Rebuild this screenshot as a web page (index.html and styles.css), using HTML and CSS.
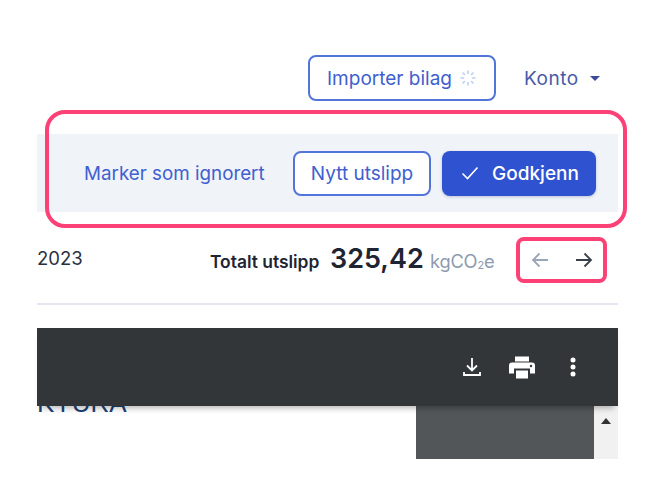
FILE: index.html
```html
<!DOCTYPE html>
<html lang="no">
<head>
<meta charset="utf-8">
<title>Bilag</title>
<link rel="stylesheet" href="styles.css">
</head>
<body>
<div class="page">
  <header class="top">
    <button class="btn btn-outline btn-import">Importer bilag
      <svg class="spinner" width="18" height="18" viewBox="0 0 18 18" fill="none" stroke="#bccff0" stroke-width="1.6" stroke-linecap="round"><path d="M9 2v2.500M9 13.500v2.500M2 9h2.500M13.500 9h2.500M4 4l1.500 1.500M12.500 12.500l1.500 1.500M4 14l1.500-1.500M12.500 5.500l1.500-1.500"/></svg>
    </button>
    <a class="account">Konto <span class="caret"></span></a>
  </header>

  <section class="actions">
    <a class="link">Marker som ignorert</a>
    <button class="btn btn-outline btn-new">Nytt utslipp</button>
    <button class="btn btn-primary">
      <svg width="18" height="14" viewBox="0 0 18 14" fill="none" stroke="#fff" stroke-width="1.6"><path d="M1.500 7.500l5 5 10-11"/></svg>
      Godkjenn
    </button>
    <div class="mark mark-actions"></div>
  </section>

  <section class="summary">
    <span class="year">2023</span>
    <div class="total">
      <span class="total-label">Totalt utslipp</span>
      <span class="total-value">325,42</span>
      <span class="total-unit">kgCO<sub>2</sub>e</span>
    </div>
    <nav class="pager">
      <svg width="18" height="16" viewBox="0 0 18 16" fill="none" stroke="#9aa5b8" stroke-width="1.8"><path d="M17 8H2M8.500 1.500L2 8l6.500 6.500"/></svg>
      <svg width="18" height="16" viewBox="0 0 18 16" fill="none" stroke="#3a3f4b" stroke-width="1.8"><path d="M1 8h15M9.500 1.500L16 8l-6.500 6.500"/></svg>
      <div class="mark mark-pager"></div>
    </nav>
  </section>

  <hr class="divider">

  <section class="viewer">
    <div class="toolbar">
      <svg width="18" height="20" viewBox="0 0 18 20" fill="none" stroke="#fff" stroke-width="1.800"><path d="M9 1v12M4 8.500l5 5 5-5M1 15v3h16v-3"/></svg>
      <svg width="26" height="23" viewBox="0 0 26 22" fill="#fff"><path d="M6 0h14v5H6zM3 6h20a3 3 0 0 1 3 3v8h-5v-5H5v5H0V9a3 3 0 0 1 3-3zM7 14h12v8H7z"/><circle cx="22" cy="9.500" r="1.200" fill="#323639"/></svg>
      <svg class="more" width="6" height="20" viewBox="0 0 6 20" fill="#fff"><circle cx="3" cy="3" r="2.500"/><circle cx="3" cy="10" r="2.500"/><circle cx="3" cy="17" r="2.500"/></svg>
    </div>
    <div class="pane">
      <div class="doc"><span class="doc-title">KYURA</span></div>
      <div class="thumbs"></div>
      <div class="scrollbar"><span class="arrow"></span></div>
    </div>
  </section>
</div>
</body>
</html>
```
FILE: styles.css
```css
* { box-sizing: border-box; }
html, body { margin: 0; height: 100%; background: #fff; overflow: hidden; }
body { font-family: Inter, "Liberation Sans", sans-serif; color: #1f2433; }

.page { width: 581px; margin-left: 37px; padding-top: 55px; }

.top { display: flex; justify-content: flex-end; align-items: center; height: 46px; margin-right: 17px; }
.btn { font: inherit; font-size: 19px; height: 45px; border-radius: 8px; display: flex; align-items: center; justify-content: center; cursor: pointer; white-space: nowrap; }
.btn-outline { background: #fff; border: 2px solid #5375da; color: #3f60cf; }
.btn-import { width: 188px; height: 46px; gap: 7px; }
.spinner { flex: none; }
.account { display: flex; align-items: center; font-size: 19px; letter-spacing: .5px; color: #4a5aa8; margin-left: 28px; width: 77px; gap: 11px; }
.caret { width: 0; height: 0; border-left: 5px solid transparent; border-right: 5px solid transparent; border-top: 5px solid #3b4a9c; }

.actions { position: relative; display: flex; align-items: center; height: 78px; margin-top: 33px; background: #f0f3f8; padding-left: 47px; }
.link { font-size: 18.800px; color: #3f60cf; width: 209px; }
.btn-new { width: 138px; margin-right: 11px; }
.btn-primary { width: 154px; gap: 13px; padding-left: 8px; background: #2f52d0; border: 0; color: #fff; font-weight: 500; box-shadow: 0 1px 3px rgba(30, 50, 120, .25); }

.mark { position: absolute; border: 4px solid #fb4175; pointer-events: none; }
.mark-actions { left: 8px; top: -24px; width: 582px; height: 118px; border-radius: 20px; }
.mark-pager { inset: 0; border-radius: 8px; }

.summary { position: relative; display: flex; align-items: center; height: 46px; margin-top: 25px; }
.year { font-size: 18.500px; width: 173px; color: #2a3040; margin-top: -4px; }
.total { display: flex; align-items: baseline; width: 306px; margin-top: -4px; }
.total-label { font-size: 17.400px; font-weight: 600; width: 120px; }
.total-value { font-size: 27px; font-weight: 600; width: 100px; }
.total-unit { font-size: 18.300px; color: #8d9ab0; letter-spacing: -0.2px; }
.total-unit sub { font-size: 11px; vertical-align: -1px; line-height: 0; }
.pager { position: relative; display: flex; justify-content: space-between; align-items: center; width: 91px; height: 46px; padding: 0 14px 0 15px; }

.divider { height: 2px; margin: 20px 0 0; border: 0; background: #e4e7f0; }

.viewer { margin-top: 23px; }
.toolbar { position: relative; z-index: 1; display: flex; align-items: center; justify-content: flex-end; height: 78px; background: #323639; padding-right: 42px; gap: 28px; box-shadow: 0 6px 6px -4px rgba(0, 0, 0, .3); }
.more { margin-left: 7px; }
.pane { display: flex; height: 53px; overflow: hidden; }
.doc { flex: 1; overflow: hidden; background: #fff; }
.doc-title { display: block; margin-top: -23px; font-family: "Liberation Sans", sans-serif; font-size: 26px; line-height: 40px; color: #1a4273; }
.thumbs { width: 178px; background: #525659; }
.scrollbar { width: 24px; background: #f1f1f1; display: flex; justify-content: center; padding-top: 12px; }
.arrow { width: 0; height: 0; border-left: 5px solid transparent; border-right: 5px solid transparent; border-bottom: 6px solid #333; }
```
